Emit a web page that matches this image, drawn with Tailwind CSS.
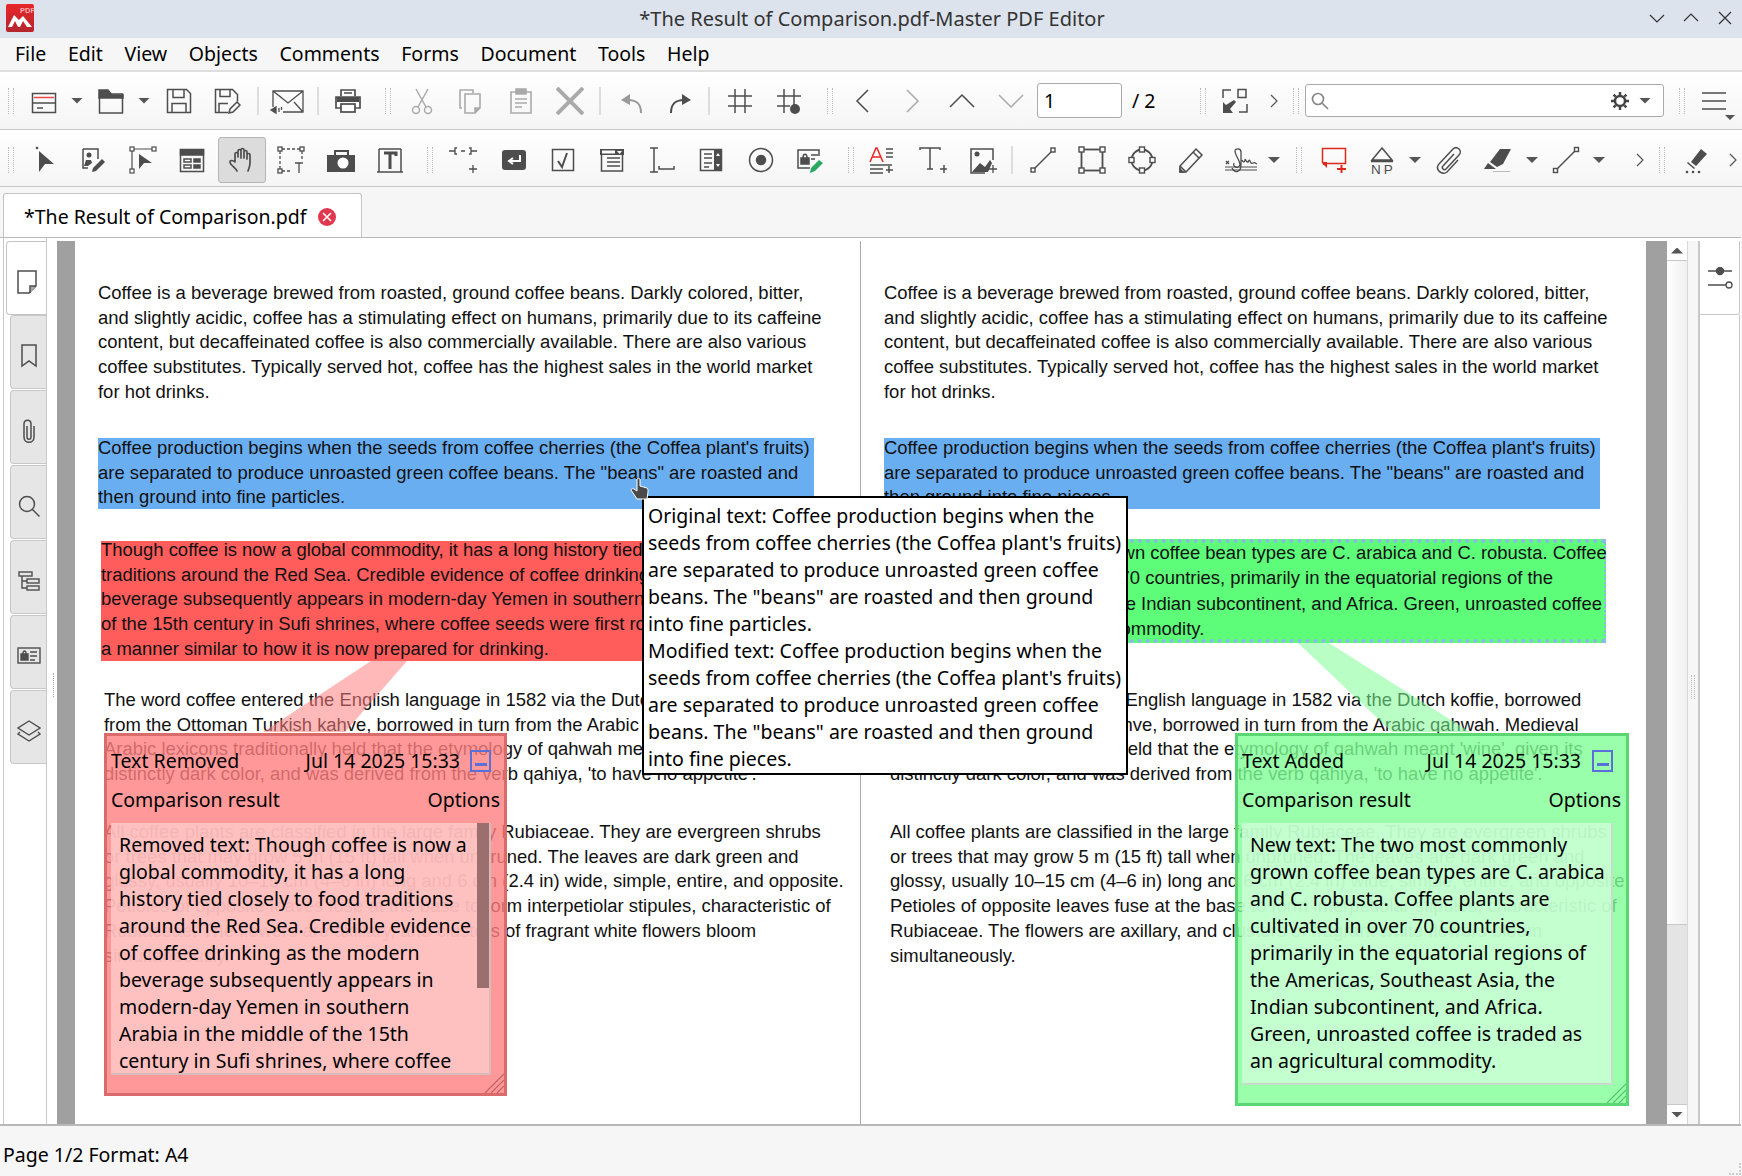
<!DOCTYPE html>
<html>
<head>
    <title>*The Result of Comparison.pdf-Master PDF Editor</title>
    <meta charset="utf-8">
    <script src="https://cdn.jsdelivr.net/npm/@tailwindcss/browser@4"></script>
</head>
<body class="w-[1742px] h-[1176px] overflow-hidden bg-[#f6f6f6] font-['Noto_Sans',sans-serif] text-[19.5px] text-black">

    <!-- title bar -->
    <div class="h-[38px] bg-[#dde3ec] relative flex items-center justify-center text-[#333] text-[20px]">
        <svg class="absolute left-[6px] top-[4px] w-[28px] h-[28px]" viewBox="0 0 28 28"><defs><linearGradient id="lg" x1="0" y1="0" x2="0" y2="1"><stop offset="0" stop-color="#e8262a"/><stop offset="1" stop-color="#b5262e"/></linearGradient></defs><rect width="28" height="28" rx="2" fill="url(#lg)"/><path d="M2 23L8 11l5 5 4-4 9 11h-5l-4-6-3 6h-2l-3-6-3 6z" fill="#fff"/><text x="14" y="9" font-family="Liberation Sans" font-size="7.500" font-weight="700" fill="#f3b0b0">PDF</text></svg>
        <span class="ml-[2px]">*The Result of Comparison.pdf-Master PDF Editor</span>
        <div class="absolute right-[9px] top-[10px] flex gap-[18px]">
            <svg class="w-[16px] h-[16px]" viewBox="0 0 16 16" fill="none" stroke="#333" stroke-width="1.2"><path d="M1 5l7 7 7-7"/></svg>
            <svg class="w-[16px] h-[16px]" viewBox="0 0 16 16" fill="none" stroke="#333" stroke-width="1.2"><path d="M1 11l7-7 7 7"/></svg>
            <svg class="w-[16px] h-[16px]" viewBox="0 0 16 16" fill="none" stroke="#333" stroke-width="1.2"><path d="M2 2l12 12M14 2L2 14"/></svg>
        </div>
    </div>

    <!-- menu -->
    <div class="h-[34px] flex items-center pl-[15px] gap-[21.7px] border-b-2 border-[#dedede]">
        <span>File</span><span>Edit</span><span>View</span><span>Objects</span><span>Comments</span><span>Forms</span><span>Document</span><span>Tools</span><span>Help</span>
    </div>

    <!-- toolbar 1 -->
    <div class="h-[58px] flex items-center pl-[8px] border-b border-[#c8c8c8] bg-gradient-to-b from-white to-[#f5f5f5]">
        <div class="w-[6px] h-[26px] border-x border-dotted border-[#bbb]"></div>
        <svg class="ml-[16px] w-7 h-7 shrink-0" viewBox="0 0 28 28" fill="none" stroke="#4d4d4d" stroke-width="1.5"><rect x="2.5" y="6.5" width="23" height="19"/><path d="M4 10.5h20" stroke="#e8484a"/><path d="M2.5 16h23M7 21h6"/></svg>
        <div class="ml-[13px] w-[12px] h-[6px] bg-[#555] [clip-path:polygon(0_0,100%_0,50%_100%)]"></div>
        <svg class="ml-[14px] w-7 h-7 shrink-0" viewBox="0 0 28 28" fill="none" stroke="#4d4d4d" stroke-width="1.5"><path d="M2.5 7h23v19h-23z"/><path d="M2 3h9l4 5h11v3H2z" fill="#4d4d4d"/></svg>
        <div class="ml-[13px] w-[12px] h-[6px] bg-[#555] [clip-path:polygon(0_0,100%_0,50%_100%)]"></div>
        <svg class="ml-[15px] w-7 h-7 shrink-0" viewBox="0 0 28 28" fill="none" stroke="#4d4d4d" stroke-width="1.5"><path d="M2.5 2.5h19l4 4v19h-23z"/><path d="M8 2.5v8h11v-8M7 25.5v-9h14v9"/></svg>
        <svg class="ml-[20px] w-7 h-7 shrink-0" viewBox="0 0 28 28" fill="none" stroke="#4d4d4d" stroke-width="1.5"><path d="M15 25.5H2.5v-23h17l5 5v7"/><path d="M7 2.5v7h10v-7M6 25.5v-9h9"/><path d="M17 25l1-4 7-7 3 3-7 7z" transform="translate(-1 1)"/></svg>
        <div class="ml-[16px] w-[2px] h-[28px] bg-[#ddd]"></div>
        <svg class="ml-[15px] w-7 h-7 shrink-0 overflow-visible" viewBox="0 0 28 28" fill="none" stroke="#4d4d4d" stroke-width="1.3"><path d="M-1 20V4h30v21H9M-1 4l15 12L29 4M8 11l-9-7M20 15l9 10"/><path d="M-3 23l5-3v6z M5 21v4M7.500 20v3" fill="#4d4d4d"/></svg>
        <div class="ml-[15px] w-[2px] h-[28px] bg-[#ddd]"></div>
        <svg class="ml-[15px] w-7 h-7 shrink-0" viewBox="0 0 28 28" fill="none" stroke="#4d4d4d" stroke-width="1.700"><path d="M7 9V3h14v6M10 6h8"/><path d="M7 21H2V10h24v11h-5" fill="#fff"/><rect x="7" y="17" width="14" height="8" fill="#fff"/><path d="M3 10h22v5H3z" fill="#4d4d4d" stroke="none"/></svg>
        <div class="ml-[23px] w-[6px] h-[26px] border-x border-dotted border-[#bbb]"></div>
        <svg class="ml-[17px] w-7 h-7 shrink-0" viewBox="0 0 28 28" fill="none" stroke="#aaa" stroke-width="1.5"><path d="M8 2l10 18M20 2L10 20"/><circle cx="8" cy="23" r="3.500"/><circle cx="20" cy="23" r="3.500"/></svg>
        <svg class="ml-[21px] w-7 h-7 shrink-0" viewBox="0 0 28 28" fill="none" stroke="#aaa" stroke-width="1.6"><path d="M5 21H3V3h13v3"/><path d="M8 7h15v14l-5 5H8z"/><path d="M23 21h-5v5" fill="#aaa"/></svg>
        <svg class="ml-[22px] w-7 h-7 shrink-0" viewBox="0 0 28 28" fill="none" stroke="#aaa" stroke-width="1.6"><path d="M9 5H4v21h20V5h-5"/><path d="M9 2h10v5H9z" fill="#aaa"/><path d="M8 12h12M8 16h12M8 20h7"/></svg>
        <svg class="ml-[21px] w-7 h-7 shrink-0" viewBox="0 0 28 28" fill="none" stroke="#aaa" stroke-width="4"><path d="M1 1l26 26M27 1L1 27"/></svg>
        <div class="ml-[15px] w-[2px] h-[28px] bg-[#ddd]"></div>
        <svg class="ml-[16px] w-7 h-7 shrink-0" viewBox="0 0 28 28" fill="none" stroke="#999" stroke-width="2"><path d="M24 26c0-8-3-13-13-13"/><path d="M13 7l-9 6 9 5z" fill="#999" stroke="none"/></svg>
        <svg class="ml-[22px] w-7 h-7 shrink-0" viewBox="0 0 28 28" fill="none" stroke="#4d4d4d" stroke-width="2"><path d="M4 26c0-8 3-13 13-13"/><path d="M15 7l9 6-9 5z" fill="#4d4d4d" stroke="none"/></svg>
        <div class="ml-[13px] w-[2px] h-[28px] bg-[#ddd]"></div>
        <svg class="ml-[16px] w-7 h-7 shrink-0" viewBox="0 0 28 28" fill="none" stroke="#4d4d4d" stroke-width="1.5"><path d="M9 2v24M19 2v24M2 9h24M2 19h24"/></svg>
        <svg class="ml-[21px] w-7 h-7 shrink-0" viewBox="0 0 28 28" fill="none" stroke="#4d4d4d" stroke-width="1.5"><path d="M9 2v24M19 2v16M2 9h24M2 19h13"/><circle cx="20" cy="22" r="5" fill="#4d4d4d" stroke="none"/></svg>
        <div class="ml-[24px] w-[6px] h-[26px] border-x border-dotted border-[#bbb]"></div>
        <svg class="ml-[15px] w-7 h-7 shrink-0" viewBox="0 0 28 28" fill="none" stroke="#4d4d4d" stroke-width="1.5"><path d="M20 3L9 14l11 11"/></svg>
        <svg class="ml-[23px] w-7 h-7 shrink-0" viewBox="0 0 28 28" fill="none" stroke="#aaa" stroke-width="1.5"><path d="M8 3l11 11L8 25"/></svg>
        <svg class="ml-[21px] w-7 h-7 shrink-0" viewBox="0 0 28 28" fill="none" stroke="#4d4d4d" stroke-width="1.5"><path d="M2 20L14 8l12 12"/></svg>
        <svg class="ml-[21px] w-7 h-7 shrink-0" viewBox="0 0 28 28" fill="none" stroke="#aaa" stroke-width="1.5"><path d="M2 8l12 12L26 8"/></svg>
        <div class="ml-[12px] w-[85px] h-[35px] bg-white border border-[#aaa] rounded-[3px] flex items-center pl-[6px]">1</div>
        <span class="ml-[10px] w-[24px] whitespace-nowrap">/ 2</span>
        <div class="ml-[44px] w-[6px] h-[26px] border-x border-dotted border-[#bbb]"></div>
        <svg class="ml-[15px] w-7 h-7 shrink-0" viewBox="0 0 28 28" fill="none" stroke="#4d4d4d" stroke-width="1.5"><path d="M2 11V3h8M26 17v8h-8"/><rect x="17" y="2.500" width="8" height="8" /><path d="M2 26V15l3 3 8-5 2 2-6 7 3 4z" fill="#4d4d4d" stroke="none"/></svg>
        <svg class="ml-[21px] w-[8px] h-[14px] shrink-0" viewBox="0 0 8 14" fill="none" stroke="#555" stroke-width="1.2"><path d="M1 1l6 6-6 6"/></svg>
        <div class="ml-[15px] w-[6px] h-[26px] border-x border-dotted border-[#bbb]"></div>
        <div class="ml-[6px] w-[359px] h-[33px] bg-white border border-[#aaa] rounded-[3px] flex items-center pl-[5px] pr-[12px]">
            <svg class="w-[18px] h-[18px]" viewBox="0 0 18 18" fill="none" stroke="#888" stroke-width="1.700"><circle cx="7" cy="7" r="5.500"/><path d="M11 11l6 6"/></svg>
            <svg class="ml-auto w-[20px] h-[20px]" viewBox="0 0 20 20" fill="none" stroke="#444" stroke-width="2.500"><circle cx="10" cy="10" r="5"/><path d="M10 1v3M10 16v3M1 10h3M16 10h3M3.600 3.600l2 2M14.400 14.400l2 2M16.400 3.600l-2 2M5.600 14.400l-2 2"/></svg>
            <div class="ml-[9px] w-[12px] h-[6px] bg-[#555] [clip-path:polygon(0_0,100%_0,50%_100%)]"></div>
        </div>
        <div class="ml-[15px] w-[6px] h-[26px] border-x border-dotted border-[#bbb]"></div>
        <svg class="ml-[16px] w-[26px] h-[20px] shrink-0" viewBox="0 0 26 20" fill="none" stroke="#4d4d4d" stroke-width="1.300"><path d="M1 2h24M1 10h24M1 18h24"/></svg>
        <div class="ml-[-2px] mt-[34px] w-[10px] h-[5px] bg-[#555] [clip-path:polygon(0_0,100%_0,50%_100%)]"></div>
    </div>

    <!-- toolbar 2 -->
    <div class="h-[57px] flex items-center pl-[8px] pt-[4px] border-b border-[#c8c8c8] bg-gradient-to-b from-white to-[#f5f5f5]">
        <div class="w-[6px] h-[26px] border-x border-dotted border-[#bbb]"></div>
        <svg class="ml-[16px] w-7 h-7 shrink-0" viewBox="0 0 28 28" fill="#4d4d4d"><path d="M9 5v21l6-8h9z"/><circle cx="7" cy="2" r="1.300"/></svg>
        <svg class="ml-[21px] w-7 h-7 shrink-0" viewBox="0 0 28 28" fill="none" stroke="#4d4d4d" stroke-width="1.500"><path d="M4 3h15v10M9 22H4V3"/><circle cx="10" cy="9" r="2.500" fill="#4d4d4d" stroke="none"/><path d="M5 20l2-6h5l1 3-4 3z" fill="#4d4d4d" stroke="none"/><path d="M13 26l1-4 9-9 3 3-9 9z" fill="#4d4d4d" stroke="none"/></svg>
        <svg class="ml-[22px] w-7 h-7 shrink-0" viewBox="0 0 28 28" fill="none" stroke="#4d4d4d" stroke-width="1.200"><path d="M3 3h22M3 3v22"/><path d="M10 8v15l5-6h8z" fill="#4d4d4d" stroke="none"/><rect x="1" y="1" width="4" height="4" fill="#fff"/><rect x="23" y="1" width="4" height="4" fill="#fff"/><rect x="1" y="23" width="4" height="4" fill="#fff"/></svg>
        <svg class="ml-[21px] w-7 h-7 shrink-0" viewBox="0 0 28 28" fill="none" stroke="#4d4d4d" stroke-width="1.500"><rect x="2.500" y="3.500" width="23" height="22"/><path d="M2.500 4h23v5h-23z" fill="#4d4d4d"/><path d="M6 13h7v3H6zM6 19h7v3H6z"/><path d="M16 13h6v3h-6zM16 19h6v3h-6z" fill="#4d4d4d"/></svg>
        <div class="ml-[12px] w-[48px] h-[46px] bg-[#dcdcdc] border border-[#b5b5b5] rounded-[3px] flex items-center justify-center shrink-0">
            <svg class="w-[26px] h-[26px]" viewBox="0 0 26 26" fill="none" stroke="#4d4d4d" stroke-width="1.700" stroke-linecap="round" stroke-linejoin="round"><path d="M8 24c-1-3-7-6-7-9 0-2 3-2 5 0V7c0-2 3-2 3 0M9 10V4c0-2 3-2 3 0v7M12 10V3c0-2 3-2 3 0v8M15 11V5c0-2 3-2 3 0v7M18 12V8c0-2 3-2 3 0v8c0 3-1 5-2 8"/></svg>
        </div>
        <svg class="ml-[11px] w-7 h-7 shrink-0" viewBox="0 0 28 28" fill="none" stroke="#4d4d4d" stroke-width="1.300"><path d="M3 5v18M5 3h18M5 25h8M25 5v9" stroke-dasharray="3 2"/><rect x="1" y="1" width="4" height="4"/><rect x="23" y="1" width="4" height="4"/><rect x="1" y="23" width="4" height="4"/><path d="M18 17h8M22 17v10"/></svg>
        <svg class="ml-[22px] w-7 h-7 shrink-0" viewBox="0 0 28 28"><path d="M0 9h7V4h15v5h6v17H0z" fill="#4d4d4d"/><path d="M9 6h11v3H9z" fill="#f8f8f8"/><circle cx="16" cy="17" r="6.500" fill="#fff" stroke="#4d4d4d" stroke-width="2"/></svg>
        <svg class="ml-[21px] w-7 h-7 shrink-0" viewBox="0 0 28 28" fill="none" stroke="#4d4d4d" stroke-width="1.500"><path d="M3 3v23M25 3v23M1 26h26M3 3h22"/><path d="M8 7h12v3M14 7v16" stroke-width="3"/></svg>
        <div class="ml-[23px] w-[6px] h-[26px] border-x border-dotted border-[#bbb]"></div>
        <svg class="ml-[16px] w-7 h-7 shrink-0" viewBox="0 0 28 28" fill="none" stroke="#4d4d4d" stroke-width="1.300"><path d="M0 5h6M22 5h6M12 5h4"/><path d="M8 2H6v6h2M20 2h2v6h-2"/><path d="M20 23h8M24 19v8"/></svg>
        <svg class="ml-[23px] w-7 h-7 shrink-0" viewBox="0 0 28 28"><rect x="2" y="4" width="24" height="20" rx="3" fill="#4d4d4d"/><path d="M20 9v6H10M13 12l-4 3 4 3" fill="none" stroke="#fff" stroke-width="2"/></svg>
        <svg class="ml-[21px] w-7 h-7 shrink-0" viewBox="0 0 28 28" fill="none" stroke="#4d4d4d" stroke-width="1.500"><rect x="3.500" y="3.500" width="21" height="21"/><path d="M9 15l4 6 5-14" stroke-width="2"/></svg>
        <svg class="ml-[21px] w-7 h-7 shrink-0" viewBox="0 0 28 28" fill="none" stroke="#4d4d4d" stroke-width="1.500"><path d="M3.500 9v16h21V4"/><path d="M2 3h24v6H2z" fill="#4d4d4d" stroke="none"/><path d="M4 4.500h13v3H4z" fill="#fff" stroke="none"/><path d="M19 5h5l-2.500 3z" fill="#fff" stroke="none"/><path d="M9 12h13M9 16h13M9 20h13"/></svg>
        <svg class="ml-[21px] w-7 h-7 shrink-0" viewBox="0 0 28 28" fill="none" stroke="#4d4d4d" stroke-width="1.500"><path d="M3 2h8M7 2v24M3 26h8M12 20v3h15v-3"/></svg>
        <svg class="ml-[22px] w-7 h-7 shrink-0" viewBox="0 0 28 28" fill="none" stroke="#4d4d4d" stroke-width="1.500"><rect x="3.500" y="3.500" width="21" height="21"/><path d="M7 8h8M7 12h8M7 17h8M7 21h5"/><rect x="17" y="3" width="8" height="22" fill="#4d4d4d" stroke="none"/><path d="M19 10l2-3 2 3zM19 18l2 3 2-3z" fill="#fff" stroke="none"/></svg>
        <svg class="ml-[22px] w-7 h-7 shrink-0" viewBox="0 0 28 28" fill="none" stroke="#4d4d4d" stroke-width="1.500"><circle cx="14" cy="14" r="11.500"/><circle cx="14" cy="14" r="4.500" fill="#4d4d4d"/></svg>
        <svg class="ml-[21px] w-7 h-7 shrink-0" viewBox="0 0 28 28" fill="none" stroke="#4d4d4d" stroke-width="1.500"><path d="M23 10V4H2v18h12"/><path d="M5 12h8v6H5z" fill="#4d4d4d"/><path d="M7 12c0-5 4-5 4 0" /><path d="M15 9h7M15 13h4"/><path d="M14 27l1-5 8-8 4 3-8 8z" fill="#2aa860" stroke="none"/></svg>
        <div class="ml-[24px] w-[6px] h-[26px] border-x border-dotted border-[#bbb]"></div>
        <svg class="ml-[14px] w-7 h-7 shrink-0" viewBox="0 0 28 28" fill="none" stroke="#4d4d4d" stroke-width="1.500"><path d="M2 16L8 2h1l6 14M4 11h9" stroke="#ee2222"/><path d="M18 3h7M18 7h7M18 11h7M2 19h22M2 23h13M2 27h13M21 20v7M18 24h7"/></svg>
        <svg class="ml-[23px] w-7 h-7 shrink-0" viewBox="0 0 28 28" fill="none" stroke="#4d4d4d" stroke-width="1.500"><path d="M1 4V2h20v2M11 2v21M8 23h6M21 23h8M25 19v8"/></svg>
        <svg class="ml-[22px] w-7 h-7 shrink-0" viewBox="0 0 28 28"><path d="M24 14V3H2v24h14" fill="none" stroke="#4d4d4d" stroke-width="1.500"/><circle cx="8" cy="8" r="2.500" fill="#4d4d4d"/><path d="M3 26l8-9 5 4 5-7 2 3-4 9z" fill="#4d4d4d"/><path d="M20 23h8M24 19v8" stroke="#4d4d4d" stroke-width="1.300"/></svg>
        <div class="ml-[14px] w-[2px] h-[28px] bg-[#ddd]"></div>
        <svg class="ml-[16px] w-7 h-7 shrink-0" viewBox="0 0 28 28" fill="none" stroke="#4d4d4d" stroke-width="1.400"><path d="M5 23L23 5"/><rect x="2" y="22" width="4" height="4" fill="#fff"/><rect x="22" y="2" width="4" height="4" fill="#fff"/></svg>
        <svg class="ml-[21px] w-7 h-7 shrink-0" viewBox="0 0 28 28" fill="none" stroke="#4d4d4d" stroke-width="1.400"><rect x="3.500" y="3.500" width="21" height="21" stroke-width="1.800"/><rect x="1" y="1" width="5" height="5" fill="#fff"/><rect x="22" y="1" width="5" height="5" fill="#fff"/><rect x="1" y="22" width="5" height="5" fill="#fff"/><rect x="22" y="22" width="5" height="5" fill="#fff"/></svg>
        <svg class="ml-[22px] w-7 h-7 shrink-0" viewBox="0 0 28 28" fill="none" stroke="#4d4d4d" stroke-width="1.400"><circle cx="14" cy="14" r="10.500" stroke-width="1.800"/><rect x="11.500" y="1" width="5" height="5" fill="#fff"/><rect x="11.500" y="22" width="5" height="5" fill="#fff"/><rect x="1" y="11.500" width="5" height="5" fill="#fff"/><rect x="22" y="11.500" width="5" height="5" fill="#fff"/></svg>
        <svg class="ml-[21px] w-7 h-7 shrink-0" viewBox="0 0 28 28" fill="none" stroke="#4d4d4d" stroke-width="1.500"><path d="M3 26v-6L19 3l6 6L9 26z"/><path d="M3 20l6 6M16 6l6 6"/><path d="M3 26v-3l3 3z" fill="#4d4d4d"/></svg>
        <svg class="ml-[19px] w-[34px] h-7 shrink-0" viewBox="0 0 34 28" fill="none" stroke="#4d4d4d" stroke-width="1.300"><path d="M1 21h32M1 24h32" stroke-width="1"/><path d="M2 15l3 3M5 15l-3 3"/><path d="M8 22c3 6 9 4 9-3V6c0-4-6-4-6-1 0 4 4 8 5 13 0 5-8 4-6-1M18 14c1 3 3 2 3 0s2 3 3 2 1-3 2-1 1 3 3 2 2 0 4 1"/></svg>
        <div class="ml-[10px] w-[12px] h-[6px] bg-[#555] [clip-path:polygon(0_0,100%_0,50%_100%)]"></div>
        <div class="ml-[16px] w-[6px] h-[26px] border-x border-dotted border-[#bbb]"></div>
        <svg class="ml-[17px] w-7 h-7 shrink-0" viewBox="0 0 28 28" fill="none" stroke="#d92a1c" stroke-width="1.500"><path d="M3.500 17V2.500h23v15H8"/><path d="M3 16h5v6l-3-3H4z" fill="#d92a1c" stroke="none"/><path d="M18 23h9M22.500 19v8" stroke-width="2"/></svg>
        <svg class="ml-[21px] w-7 h-7 shrink-0" viewBox="0 0 28 28" fill="none" stroke="#4d4d4d" stroke-width="1.500"><path d="M14 2L4 14h20zM3 15.500h22" /><text x="3" y="28" font-family="Liberation Sans" font-size="13.500" letter-spacing="3" fill="#4d4d4d" stroke="none">NP</text></svg>
        <div class="ml-[13px] w-[12px] h-[6px] bg-[#555] [clip-path:polygon(0_0,100%_0,50%_100%)]"></div>
        <svg class="ml-[14px] w-7 h-7 shrink-0" viewBox="0 0 28 28" fill="none" stroke="#4d4d4d" stroke-width="1.500"><path d="M19 8L8 20c-2 2 1 5 3 3L24 9c4-4-2-10-6-6L4 18c-5 5 3 12 8 8l11-12"/></svg>
        <svg class="ml-[20px] w-7 h-7 shrink-0" viewBox="0 0 28 28" fill="#4d4d4d"><path d="M7 16L17 3h11l-8 15-6 3z"/><path d="M5 17l8 6H1z"/><path d="M10 25h17v1H10z" fill="#bbb"/></svg>
        <div class="ml-[15px] w-[12px] h-[6px] bg-[#555] [clip-path:polygon(0_0,100%_0,50%_100%)]"></div>
        <svg class="ml-[14px] w-7 h-7 shrink-0" viewBox="0 0 28 28" fill="none" stroke="#4d4d4d" stroke-width="1.400"><path d="M4 24L24 4"/><rect x="1.500" y="22.500" width="4" height="4" fill="#fff"/><rect x="22.500" y="1.500" width="4" height="4" fill="#fff"/></svg>
        <div class="ml-[13px] w-[12px] h-[6px] bg-[#555] [clip-path:polygon(0_0,100%_0,50%_100%)]"></div>
        <svg class="ml-[31px] w-[8px] h-[14px] shrink-0" viewBox="0 0 8 14" fill="none" stroke="#555" stroke-width="1.2"><path d="M1 1l6 6-6 6"/></svg>
        <div class="ml-[15px] w-[6px] h-[26px] border-x border-dotted border-[#bbb]"></div>
        <svg class="ml-[16px] w-7 h-7 shrink-0" viewBox="0 0 28 28" fill="#4d4d4d"><path d="M10 16L20 3l6 5-11 12z"/><path d="M7 16l7 6-1 1-7-6z"/><circle cx="6" cy="26" r="1.300"/><circle cx="12" cy="26" r="1.300"/><circle cx="18" cy="26" r="1.300"/></svg>
        <svg class="ml-[20px] w-[8px] h-[14px] shrink-0" viewBox="0 0 8 14" fill="none" stroke="#555" stroke-width="1.2"><path d="M1 1l6 6-6 6"/></svg>
    </div>

    <!-- tab bar -->
    <div class="h-[50px] flex items-end pl-[3px]">
        <div class="w-[359px] h-[44px] bg-white border border-b-0 border-[#c4c4c4] rounded-t-[3px] flex items-center pl-[20px] pt-[2px]">
            <span>*The Result of Comparison.pdf</span>
            <span class="ml-[12px] w-[18px] h-[18px] rounded-full bg-[#e0384e] flex items-center justify-center">
                <svg class="w-[10px] h-[10px]" viewBox="0 0 10 10" fill="none" stroke="#fff" stroke-width="1.600"><path d="M1 1l8 8M9 1L1 9"/></svg>
            </span>
        </div>
    </div>

    <!-- main area -->
    <div class="h-[889px] bg-white border-t border-b-2 border-[#b8b8b8] flex relative mr-[1px]">
        <div class="w-[43px] shrink-0 pl-[3px] pt-[3px] flex flex-col items-end border-l border-[#c8c8c8] ml-[3px]">
            <div class="w-[40px] h-[74px] pt-[8px] bg-white border border-r-0 border-[#c4c4c4] rounded-l-[4px] flex items-center justify-center">
                <svg class="w-[24px] h-[26px]" viewBox="0 0 24 26" fill="none" stroke="#4d4d4d" stroke-width="1.500"><path d="M3 2h18v15l-7 7H3z"/><path d="M21 17h-6v7" fill="#aaa"/></svg>
            </div>
            <div class="w-[36px] h-[74px] pt-[8px] bg-[#e6e6e6] border border-r-0 border-[#c8c8c8] rounded-l-[4px] flex items-center justify-center">
                <svg class="w-[18px] h-[24px]" viewBox="0 0 18 24" fill="none" stroke="#4d4d4d" stroke-width="1.500"><path d="M2 1h14v21l-7-5-7 5z"/></svg>
            </div>
            <div class="mt-[1px] w-[36px] h-[74px] pt-[8px] bg-[#e6e6e6] border border-r-0 border-[#c8c8c8] rounded-l-[4px] flex items-center justify-center">
                <svg class="w-[14px] h-[24px]" viewBox="0 0 14 24" fill="none" stroke="#4d4d4d" stroke-width="1.500"><path d="M5 7v11c0 3 4 3 4 0V5c0-5-7-5-7 0v13c0 7 10 7 10 0V7"/></svg>
            </div>
            <div class="mt-[1px] w-[36px] h-[74px] pt-[8px] bg-[#e6e6e6] border border-r-0 border-[#c8c8c8] rounded-l-[4px] flex items-center justify-center">
                <svg class="w-[22px] h-[22px]" viewBox="0 0 22 22" fill="none" stroke="#4d4d4d" stroke-width="1.500"><circle cx="9" cy="9" r="7.500"/><path d="M14.500 14.500l7 7"/></svg>
            </div>
            <div class="mt-[1px] w-[36px] h-[74px] pt-[8px] bg-[#e6e6e6] border border-r-0 border-[#c8c8c8] rounded-l-[4px] flex items-center justify-center">
                <svg class="w-[22px] h-[20px]" viewBox="0 0 22 20" fill="none" stroke="#4d4d4d" stroke-width="1.400"><rect x="1" y="1" width="13" height="4"/><rect x="9" y="8" width="12" height="4"/><rect x="9" y="15" width="12" height="4"/><path d="M4 5v12h5M4 10h5"/></svg>
            </div>
            <div class="mt-[1px] w-[36px] h-[74px] pt-[8px] bg-[#e6e6e6] border border-r-0 border-[#c8c8c8] rounded-l-[4px] flex items-center justify-center">
                <svg class="w-[24px] h-[18px]" viewBox="0 0 24 18" fill="none" stroke="#4d4d4d" stroke-width="1.400"><rect x="1" y="1" width="22" height="15"/><path d="M4 7h7v6H4z" fill="#4d4d4d"/><path d="M6 7c0-4 3-4 3 0M13 5h7M13 9h7M13 13h5"/></svg>
            </div>
            <div class="mt-[1px] w-[36px] h-[74px] pt-[8px] bg-[#e6e6e6] border border-r-0 border-[#c8c8c8] rounded-l-[4px] flex items-center justify-center">
                <svg class="w-[24px] h-[22px]" viewBox="0 0 24 22" fill="none" stroke="#4d4d4d" stroke-width="1.400"><path d="M12 1l11 7-11 7L1 8z"/><path d="M3 12l-2 2 11 7 11-7-2-2"/></svg>
            </div>
        </div>
        <div class="w-[11px] shrink-0 border-l border-[#c8c8c8] flex items-center">
            <div class="ml-[6px] h-[24px] mt-[8px] border-l border-dotted border-[#aaa]"></div>
        </div>

        <!-- document view -->
        <div class="flex-1 flex pt-[3px] min-w-0">
            <div class="w-[18px] bg-[#a0a0a0] shrink-0"></div>

            <div class="w-[1571px] shrink-0 relative text-[#111] font-['Liberation_Sans',sans-serif] text-[18.45px] leading-[24.7px] whitespace-nowrap">
                <div class="absolute left-[785px] top-0 bottom-0 w-[1px] bg-[#aaa]"></div>

                <!-- left page -->
                <div class="absolute left-[23px] top-[40px]">Coffee is a beverage brewed from roasted, ground coffee beans. Darkly colored, bitter,<br>and slightly acidic, coffee has a stimulating effect on humans, primarily due to its caffeine<br>content, but decaffeinated coffee is also commercially available. There are also various<br>coffee substitutes. Typically served hot, coffee has the highest sales in the world market<br>for hot drinks.</div>
                <div class="absolute left-[23px] top-[197px] w-[716px] h-[71px] bg-[#6aaef2]"><div class="-mt-[2px]">Coffee production begins when the seeds from coffee cherries (the Coffea plant's fruits)<br>are separated to produce unroasted green coffee beans. The "beans" are roasted and<br>then ground into fine particles.</div></div>
                <div class="absolute left-[26px] top-[300px] w-[716px] h-[120px] bg-[#ff5c5c]"><div class="-mt-[3px]">Though coffee is now a global commodity, it has a long history tied closely to food<br>traditions around the Red Sea. Credible evidence of coffee drinking as the modern<br>beverage subsequently appears in modern-day Yemen in southern Arabia in the middle<br>of the 15th century in Sufi shrines, where coffee seeds were first roasted and brewed in<br>a manner similar to how it is now prepared for drinking.</div></div>
                <div class="absolute left-[29px] top-[447px]">The word coffee entered the English language in 1582 via the Dutch koffie, borrowed<br>from the Ottoman Turkish kahve, borrowed in turn from the Arabic qahwah. Medieval<br>Arabic lexicons traditionally held that the etymology of qahwah meant 'wine', given its<br>distinctly dark color, and was derived from the verb qahiya, 'to have no appetite'.</div>
                <div class="absolute left-[29px] top-[579px]">All coffee plants are classified in the large family Rubiaceae. They are evergreen shrubs<br>or trees that may grow 5 m (15 ft) tall when unpruned. The leaves are dark green and<br>glossy, usually 10–15 cm (4–6 in) long and 6 cm (2.4 in) wide, simple, entire, and opposite.<br>Petioles of opposite leaves fuse at the base to form interpetiolar stipules, characteristic of<br>Rubiaceae. The flowers are axillary, and clusters of fragrant white flowers bloom<br>simultaneously.</div>

                <!-- right page -->
                <div class="absolute left-[809px] top-[40px]">Coffee is a beverage brewed from roasted, ground coffee beans. Darkly colored, bitter,<br>and slightly acidic, coffee has a stimulating effect on humans, primarily due to its caffeine<br>content, but decaffeinated coffee is also commercially available. There are also various<br>coffee substitutes. Typically served hot, coffee has the highest sales in the world market<br>for hot drinks.</div>
                <div class="absolute left-[809px] top-[197px] w-[716px] h-[71px] bg-[#6aaef2]"><div class="-mt-[2px]">Coffee production begins when the seeds from coffee cherries (the Coffea plant's fruits)<br>are separated to produce unroasted green coffee beans. The "beans" are roasted and<br>then ground into fine pieces.</div></div>
                <div class="absolute left-[815px] top-[298px] w-[716px] h-[104px] bg-[#5dfd7a] border-y-[4px] border-r-[2px] border-dotted border-[#8fb6e8]"><div class="-mt-[3px] leading-[25.300px]">The two most commonly grown coffee bean types are C. arabica and C. robusta. Coffee<br>plants are cultivated in over 70 countries, primarily in the equatorial regions of the<br>Americas, Southeast Asia, the Indian subcontinent, and Africa. Green, unroasted coffee<br>is traded as an agricultural commodity.</div></div>
                <div class="absolute left-[815px] top-[447px]">The word coffee entered the English language in 1582 via the Dutch koffie, borrowed<br>from the Ottoman Turkish kahve, borrowed in turn from the Arabic qahwah. Medieval<br>Arabic lexicons traditionally held that the etymology of qahwah meant 'wine', given its<br>distinctly dark color, and was derived from the verb qahiya, 'to have no appetite'.</div>
                <div class="absolute left-[815px] top-[579px]">All coffee plants are classified in the large family Rubiaceae. They are evergreen shrubs<br>or trees that may grow 5 m (15 ft) tall when unpruned. The leaves are dark green and<br>glossy, usually 10–15 cm (4–6 in) long and 6 cm (2.4 in) wide, simple, entire, and opposite.<br>Petioles of opposite leaves fuse at the base to form interpetiolar stipules, characteristic of<br>Rubiaceae. The flowers are axillary, and clusters of fragrant white flowers bloom<br>simultaneously.</div>

                <!-- callout pointers -->
                <svg class="absolute left-0 top-0 w-[1571px] h-[880px] pointer-events-none" viewBox="0 0 1571 880"><polygon points="296,420 332,420 270,491 188,491" fill="#ff8080" fill-opacity="0.55"/><polygon points="1223,402 1254,402 1395,491 1317,491" fill="#80ff95" fill-opacity="0.55"/></svg>

                <!-- removed text note -->
                <div class="absolute left-[29px] top-[492px] w-[403px] h-[363px] bg-[#ff8080]/80 border-[3px] border-[#d96b6b] font-['Noto_Sans',sans-serif] text-[19.5px] leading-[27px] text-black">
                    <div class="flex items-center h-[27px] mt-[11px] pl-[4px] pr-[13px]"><span>Text Removed</span><span class="ml-auto">Jul 14 2025 15:33</span><div class="ml-[10px] w-[21px] h-[22px] border-2 border-[#5a6fd8] flex items-end justify-center pb-[4px]"><div class="w-[12px] h-[3px] bg-[#5a6fd8]"></div></div></div>
                    <div class="flex items-center h-[27px] mt-[12px] pl-[4px] pr-[4px]"><span>Comparison result</span><span class="ml-auto">Options</span></div>
                    <div class="relative mt-[10px] ml-[4px] w-[380px] h-[252px] bg-[#ffcdcd]/75 border-r-2 border-b-2 border-[#d8bcbc] overflow-hidden pl-[8px] pt-[8px]">
                        Removed text: Though coffee is now a<br>global commodity, it has a long<br>history tied closely to food traditions<br>around the Red Sea. Credible evidence<br>of coffee drinking as the modern<br>beverage subsequently appears in<br>modern-day Yemen in southern<br>Arabia in the middle of the 15th<br>century in Sufi shrines, where coffee
                        <div class="absolute right-0 top-0 w-[12px] h-[165px] bg-[#9c6f6f]"></div>
                    </div>
                    <svg class="absolute right-0 bottom-0 w-[20px] h-[20px]" viewBox="0 0 20 20" fill="none" stroke="#c26060" stroke-width="1.200"><path d="M1 20L20 1M7 20L20 7M13 20l7-7"/></svg>
                </div>

                <!-- added text note -->
                <div class="absolute left-[1160px] top-[492px] w-[394px] h-[373px] bg-[#80ff95]/80 border-[3px] border-[#5ad673] font-['Noto_Sans',sans-serif] text-[19.5px] leading-[27px] text-black">
                    <div class="flex items-center h-[27px] mt-[11px] pl-[4px] pr-[13px]"><span>Text Added</span><span class="ml-auto">Jul 14 2025 15:33</span><div class="ml-[11px] w-[21px] h-[22px] border-2 border-[#5a6fd8] flex items-end justify-center pb-[4px]"><div class="w-[12px] h-[3px] bg-[#5a6fd8]"></div></div></div>
                    <div class="flex items-center h-[27px] mt-[12px] pl-[4px] pr-[5px]"><span>Comparison result</span><span class="ml-auto">Options</span></div>
                    <div class="mt-[10px] ml-[4px] w-[371px] h-[262px] bg-[#d2ffdd]/75 border-r-2 border-b-2 border-[#c8dccb] overflow-hidden pl-[8px] pt-[8px]">
                        New text: The two most commonly<br>grown coffee bean types are C. arabica<br>and C. robusta. Coffee plants are<br>cultivated in over 70 countries,<br>primarily in the equatorial regions of<br>the Americas, Southeast Asia, the<br>Indian subcontinent, and Africa.<br>Green, unroasted coffee is traded as<br>an agricultural commodity.
                    </div>
                    <svg class="absolute right-0 bottom-0 w-[20px] h-[20px]" viewBox="0 0 20 20" fill="none" stroke="#52c46a" stroke-width="1.200"><path d="M1 20L20 1M7 20L20 7M13 20l7-7"/></svg>
                </div>

                <!-- tooltip -->
                <div class="absolute left-[567px] top-[255px] w-[486px] h-[279px] bg-white border-2 border-black pl-[4px] pt-[4px] font-['Noto_Sans',sans-serif] text-[19.5px] leading-[27px] text-black">Original text: Coffee production begins when the<br>seeds from coffee cherries (the Coffea plant's fruits)<br>are separated to produce unroasted green coffee<br>beans. The "beans" are roasted and then ground<br>into fine particles.<br>Modified text: Coffee production begins when the<br>seeds from coffee cherries (the Coffea plant's fruits)<br>are separated to produce unroasted green coffee<br>beans. The "beans" are roasted and then ground<br>into fine pieces.</div>

                <!-- hand cursor -->
                <svg class="absolute left-[555px] top-[237px] w-[19px] h-[22px]" viewBox="0 0 19 22"><path d="M7 1c1-1 2-1 3 0v7l7 2c1 1 1 2 1 4l-1 7H7L1 12c0-1 1-2 3-1l3 2z" fill="#4a4a4a" stroke="#fff" stroke-width="1"/></svg>
            </div>

            <div class="w-[21px] bg-[#a0a0a0] shrink-0"></div>

            <!-- scrollbar -->
            <div class="w-[21px] shrink-0 flex flex-col bg-[#e4e4e4] border-r border-[#d8d8d8]">
                <div class="h-[20px] bg-white border-b border-[#c8c8c8] flex items-center justify-center"><div class="w-[12px] h-[6px] bg-[#555] [clip-path:polygon(50%_0,100%_100%,0_100%)]"></div></div>
                <div class="h-[664px] bg-gradient-to-r from-white to-[#f0f0f0] border-b border-[#c8c8c8]"></div>
                <div class="flex-1"></div>
                <div class="h-[20px] bg-white border-t border-[#c8c8c8] flex items-center justify-center"><div class="w-[12px] h-[6px] bg-[#555] [clip-path:polygon(0_0,100%_0,50%_100%)]"></div></div>
            </div>

            <div class="w-[10px] shrink-0 bg-[#f6f6f6] flex items-center justify-center">
                <div class="h-[24px] mt-[8px] w-[4px] border-x border-dotted border-[#bbb]"></div>
            </div>

            <!-- right panel -->
            <div class="w-[42px] shrink-0 bg-white border-l-2 border-[#c8c8c8] flex flex-col">
                <div class="h-[74px] border-b border-r border-[#c8c8c8] rounded-br-[3px] flex items-center justify-center">
                    <svg class="w-[26px] h-[22px]" viewBox="0 0 26 22" fill="none" stroke="#4d4d4d" stroke-width="1.300"><path d="M1 4h24M1 18h20"/><circle cx="13" cy="4" r="3.500" fill="#4d4d4d"/><circle cx="22" cy="18" r="3" fill="#fff"/></svg>
                </div>
                <div class="flex-1 border-r border-[#c8c8c8]"></div>
            </div>
        </div>
    </div>

    <!-- status bar -->
    <div class="h-[50px] flex items-center pl-[3px] pt-[8px] relative">
        <span>Page 1/2 Format: A4</span>
        <div class="absolute right-[1px] bottom-[1px] w-[12px] h-[12px] border-b-2 border-r-2 border-dotted border-[#ccc]"></div>
    </div>
</body>
</html>
